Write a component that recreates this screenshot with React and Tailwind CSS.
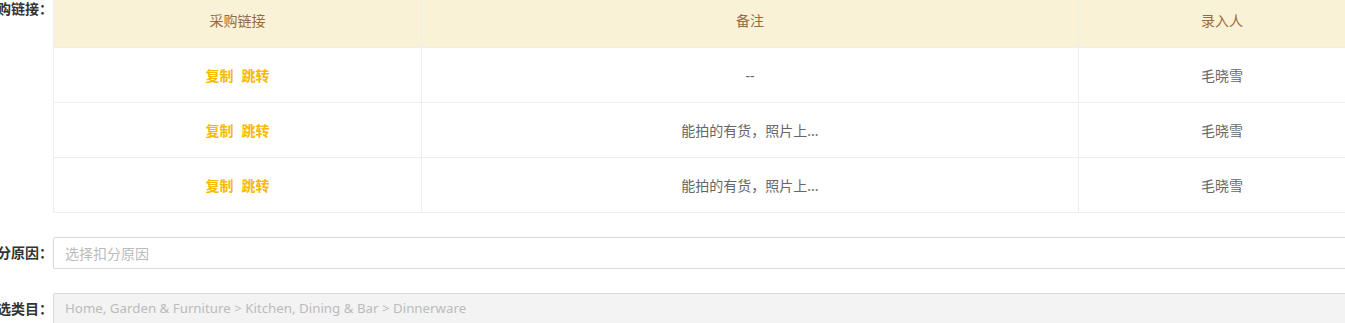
export default function App() {
  const rows = [
    { note: "--", who: "毛晓雪" },
    { note: "能拍的有货，照片上...", who: "毛晓雪" },
    { note: "能拍的有货，照片上...", who: "毛晓雪" },
  ];
  const font = { fontFamily: '"Noto Sans", "Noto Sans CJK SC", sans-serif' };
  const label = "w-[53px] shrink-0 flex justify-end whitespace-nowrap leading-[32px] text-[14px] font-bold text-[#333]";
  return (
    <div className="w-[1345px] h-[323px] overflow-hidden bg-white text-[14px]" style={font}>
      <div className="-mt-[7px]">
        <div className="flex">
          <div className={label}>采购链接：</div>
          <div className="w-[1311px] shrink-0 border-l border-[#eee]">
            <div className="grid grid-cols-[368px_657px_286px] h-[54px] bg-[#faf2d7] text-[#9a6a3a]">
              <div className="flex items-center justify-center border-r border-[#eee]">采购链接</div>
              <div className="flex items-center justify-center border-r border-[#eee]">备注</div>
              <div className="flex items-center justify-center">录入人</div>
            </div>
            {rows.map((r, i) => (
              <div key={i} className="grid grid-cols-[368px_657px_286px] h-[55px] border-t border-[#eee] text-[#666]">
                <div className="flex items-center justify-center gap-[8px] border-r border-[#eee] text-[#fbb900] font-semibold">
                  <span>复制</span>
                  <span>跳转</span>
                </div>
                <div className="flex items-center justify-center border-r border-[#eee]">{r.note}</div>
                <div className="flex items-center justify-center">{r.who}</div>
              </div>
            ))}
            <div className="border-t border-[#eee]" />
          </div>
        </div>
        <div className="flex mt-[24px]">
          <div className={label}>扣分原因：</div>
          <div className="w-[1311px] shrink-0 h-[32px] border border-[#d9d9d9] rounded-[2px] flex items-center px-[11px] text-[#bbb]">
            选择扣分原因
          </div>
        </div>
        <div className="flex mt-[24px]">
          <div className={label}>已选类目：</div>
          <div className="w-[1311px] shrink-0 h-[32px] border border-[#d9d9d9] rounded-[2px] bg-[#f3f3f3] flex items-center px-[11px] text-[#bbb] text-[13.3px]">
            Home, Garden &amp; Furniture &gt; Kitchen, Dining &amp; Bar &gt; Dinnerware
          </div>
        </div>
      </div>
    </div>
  );
}
